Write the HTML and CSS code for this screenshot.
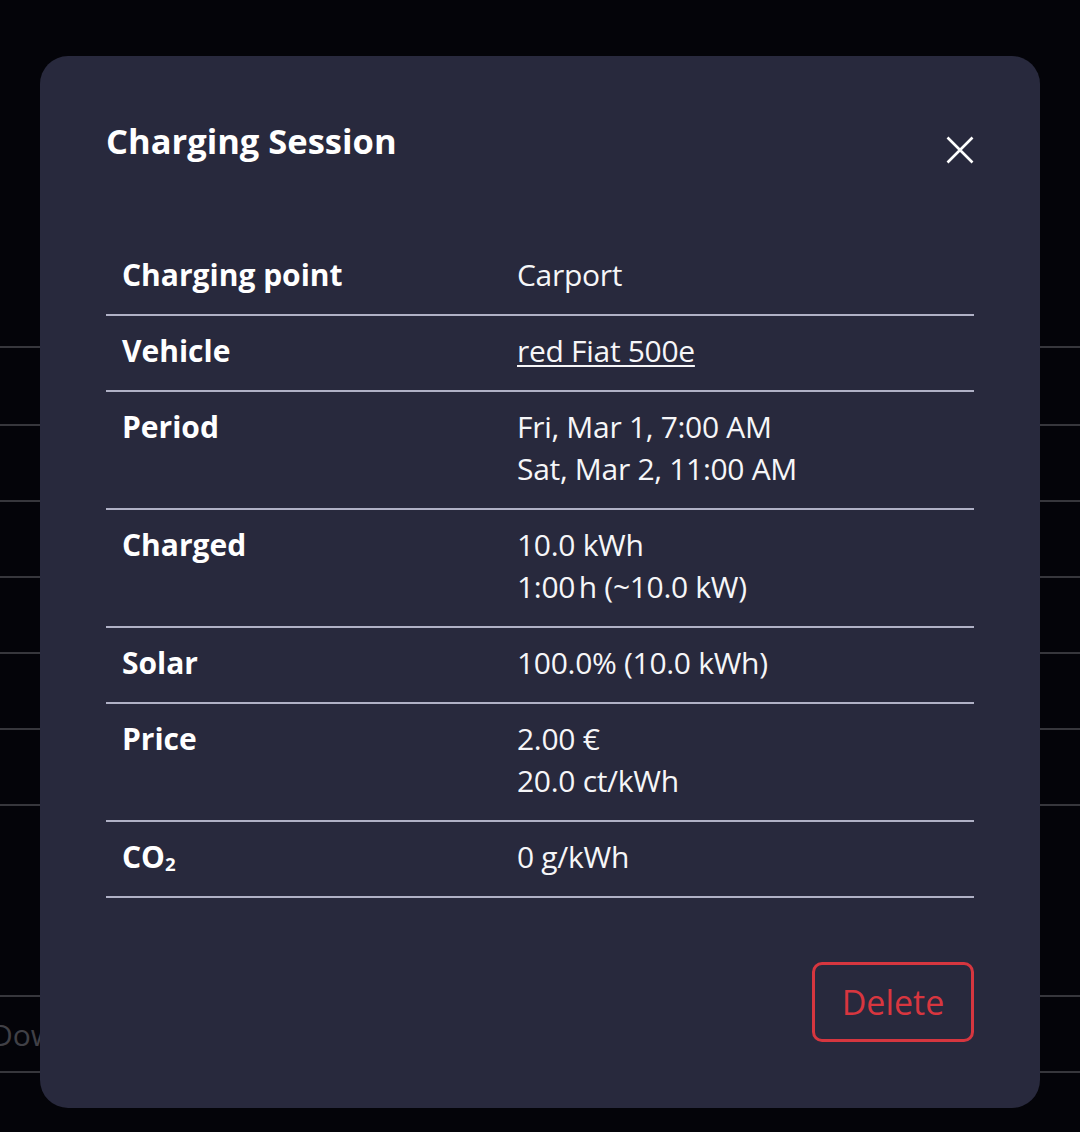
FILE: index.html
```html
<!DOCTYPE html>
<html lang="en">
<head>
<meta charset="utf-8">
<title>Charging Session</title>
<link rel="stylesheet" href="styles.css">
</head>
<body>
  <div class="backdrop-page">
    <div class="bg-row bg-row-first"></div>
    <div class="bg-row"></div>
    <div class="bg-row"></div>
    <div class="bg-row"></div>
    <div class="bg-row"></div>
    <div class="bg-row"></div>
    <div class="bg-row bg-row-last"></div>
    <div class="bg-download"><span class="bg-download-text">Download</span></div>
  </div>

  <div class="modal" role="dialog" aria-labelledby="modal-title">
    <div class="modal-header">
      <h2 id="modal-title" class="modal-title">Charging Session</h2>
      <button class="close-btn" aria-label="Close">
        <svg width="28" height="28" viewBox="0 0 28 28" aria-hidden="true">
          <path d="M1.5 1.5 L26.5 26.5 M26.5 1.5 L1.5 26.5" stroke="#ffffff" stroke-width="2.6" fill="none"/>
        </svg>
      </button>
    </div>

    <div class="session-table">
      <div class="row">
        <div class="label">Charging point</div>
        <div class="value">Carport</div>
      </div>
      <div class="row">
        <div class="label">Vehicle</div>
        <div class="value"><a class="vehicle-link" href="#">red Fiat 500e</a></div>
      </div>
      <div class="row">
        <div class="label">Period</div>
        <div class="value">Fri, Mar 1, 7:00 AM<br>Sat, Mar 2, 11:00 AM</div>
      </div>
      <div class="row">
        <div class="label">Charged</div>
        <div class="value">10.0 kWh<br>1:00&#8239;h (~10.0 kW)</div>
      </div>
      <div class="row">
        <div class="label">Solar</div>
        <div class="value">100.0% (10.0 kWh)</div>
      </div>
      <div class="row">
        <div class="label">Price</div>
        <div class="value">2.00 €<br>20.0 ct/kWh</div>
      </div>
      <div class="row">
        <div class="label">CO<span class="sub">2</span></div>
        <div class="value">0 g/kWh</div>
      </div>
    </div>

    <div class="modal-footer">
      <button class="delete-btn">Delete</button>
    </div>
  </div>
</body>
</html>
```

FILE: styles.css
```css
* {
  box-sizing: border-box;
}

html, body {
  margin: 0;
  padding: 0;
}

body {
  width: 1080px;
  height: 1132px;
  background: #040409;
  font-family: "Open Sans", "DejaVu Sans", sans-serif;
  color: #ffffff;
  overflow: hidden;
  position: relative;
}

/* faint page content behind the dialog */
.backdrop-page {
  padding-top: 346px;
}

.bg-row {
  height: 76px;
  border-top: 2px solid #37373c;
}

.bg-row-first {
  height: 78px;
}

.bg-row-last {
  height: 191px;
}

.bg-download {
  height: 78px;
  border-top: 2px solid #37373c;
  border-bottom: 2px solid #37373c;
  display: flex;
  align-items: center;
  white-space: nowrap;
}

.bg-download-text {
  margin-left: -9px;
  font-size: 30px;
  color: #404046;
}

/* dialog */
.modal {
  position: absolute;
  left: 40px;
  top: 56px;
  width: 1000px;
  height: 1052px;
  background: #28293d;
  border-radius: 28px;
  padding: 64px 66px 66px;
  display: flex;
  flex-direction: column;
}

.modal-header {
  display: flex;
  justify-content: space-between;
  align-items: flex-start;
}

.modal-title {
  margin: 0;
  font-size: 34.5px;
  line-height: 41px;
  font-weight: 700;
  color: #ffffff;
}

.close-btn {
  margin-top: 16px;
  width: 28px;
  height: 28px;
  padding: 0;
  border: 0;
  background: transparent;
  display: flex;
  cursor: pointer;
}

.session-table {
  margin-top: 76px;
}

.row {
  display: grid;
  grid-template-columns: 395px 1fr;
  padding: 14px 0 18px;
  border-bottom: 2px solid #b0b1c6;
  font-size: 30px;
  line-height: 42px;
}

.label {
  padding-left: 16px;
  font-weight: 700;
  color: #ffffff;
}

.value {
  padding-left: 16px;
  font-weight: 400;
  letter-spacing: -0.3px;
  color: #f6f6f8;
}

.sub {
  font-size: 0.62em;
  vertical-align: -0.18em;
  line-height: 0;
}

.vehicle-link {
  color: #f6f6f8;
  text-decoration: underline;
  text-decoration-thickness: 2px;
  text-underline-offset: 3px;
}

.modal-footer {
  margin-top: 64px;
  display: flex;
  justify-content: flex-end;
}

.delete-btn {
  width: 162px;
  height: 80px;
  border: 3px solid #d6363f;
  border-radius: 10px;
  background: transparent;
  color: #d8363f;
  font-family: "Open Sans", "DejaVu Sans", sans-serif;
  font-size: 34px;
  font-weight: 400;
  padding: 0;
  cursor: pointer;
}
```
